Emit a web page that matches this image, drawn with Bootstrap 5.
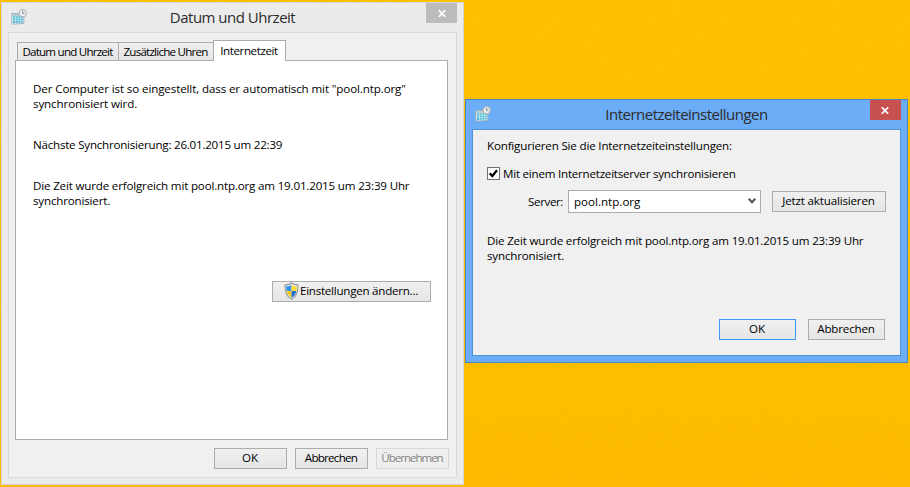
<!DOCTYPE html>
<html lang="de">
<head>
<meta charset="utf-8">
<meta name="viewport" content="width=device-width, initial-scale=1">
<title>Datum und Uhrzeit</title>
<link href="https://cdn.jsdelivr.net/npm/bootstrap@5.3.0/dist/css/bootstrap.min.css" rel="stylesheet">
<style>
body{height:487px;overflow:hidden;background:linear-gradient(#ffc000 0,#ffc000 65%,#ffba00 100%);font:11.6px/15px "Open Sans","Noto Sans",sans-serif;color:#000}
.wallpaper{left:0;top:0;width:910px;height:487px;z-index:-1}
.win{border:1px solid;padding:0 6px 6px}
.win-main{width:463px;height:483px;margin:2px 1px 0;background:#ebebeb;border-color:#d5d5d5}
.win-dialog{width:443px;height:264px;margin-top:99px;background:#6badf6;border-color:#4a87c9}
.titlebar{height:29px;flex:none}
.caption{font-size:15px;line-height:20px;letter-spacing:-.5px;color:#2b2b2b;padding-top:4px}
.app-icon{width:16px;height:16px;margin:6px 0 0 3px}
.close-btn{width:31px;height:20px;border:0;padding:0;background:#bcbcbc;color:#fff}
.win-dialog .close-btn{background:#c75050}
.client{background:#f0f0f0;border:1px solid #d9d9d9}
.win-dialog .client{border-color:#4f92d8;padding:8px 14px 15px}
.win-main .client{padding:7px 8px 8px 6px}
.tabs{height:21px;padding-left:2px;margin-bottom:-1px;z-index:1}
.tab-item{height:18px;border:1px solid #acacac;border-bottom:0;border-right:0;background:linear-gradient(#f0f0f0,#e5e5e5);padding:0 1px 0 0;line-height:18px;text-align:center;color:#000;letter-spacing:-.78px;margin-bottom:1px}
.tab-item.current{height:21px;margin:0;background:#fff;border-right:1px solid #acacac;line-height:17px;padding-bottom:2px;letter-spacing:-.4px}
.t1{width:101px}.t2{width:95px}.t3{width:73px}
.panel{background:#fff;border:1px solid #acacac;padding:20px 16px 0 17px;height:380px}
.panel p{margin:0}
.panel .sync-next{margin:26px 0}
.push{height:21px;border:1px solid #acacac;border-radius:0;padding:0 1px 1px 0;background:linear-gradient(#f0f0f0,#e5e5e5);font-size:11.6px;line-height:18px;color:#000;white-space:nowrap;letter-spacing:-.18px}
.push.default{border-color:#3c97f7}
.push:disabled{color:#838383;border-color:#d9d9d9;background:#efefef}
.push.tight{letter-spacing:-.75px}
.push.tighter{letter-spacing:-1.05px}
.w73{width:73px}.w77{width:77px}
.shield{width:15px;height:18px}
.change-btn{width:159px;margin-top:73px;gap:1px;letter-spacing:-.25px}
.actions-main{gap:8px;padding-top:8px;margin-right:-1px}
.checkbox{width:13px;height:13px;border:1px solid #707070;background:#fff;flex:none}
.check-line{margin-top:13px;gap:3px}
.server-line{margin-top:9px}
.server-label{width:76px;margin-right:5px;letter-spacing:-.4px}
.combo{width:193px;height:23px;background:#fff;border:1px solid #acacac;padding:0 4px 1px 5px;flex:none}
.update-btn{width:114px;margin-left:11px}
.status{margin-top:20px}
.actions-dialog{gap:12px;padding-right:1px}
.ls-a{letter-spacing:-.12px}.ls-b{letter-spacing:-.23px}.ls-c{letter-spacing:-.18px}
</style>
</head>
<body class="d-flex align-items-start">
<svg class="wallpaper position-absolute" aria-hidden="true"><filter id="grain" x="0" y="0" width="100%" height="100%"><feTurbulence type="fractalNoise" baseFrequency=".3" numOctaves="2" seed="4"/><feColorMatrix values="0 0 0 0 .85  0 0 0 0 .5  0 0 0 0 0  1.6 0 0 0 -.6"/></filter><rect width="910" height="487" filter="url(#grain)" opacity=".35"/></svg>
<svg class="d-none" aria-hidden="true">
  <symbol id="clock-calendar" viewBox="0 0 16 16">
    <path d="M.8 4.500h12v10l-12 .6z" fill="#e8f2f5" stroke="#9db3bd"/>
    <path d="M1.300 5h10v2h-10z" fill="#b7cbd3"/>
    <path d="M2 7.200h9.800v6.200l-9.800.5z" fill="#4fb9d3"/>
    <path d="M4.500 7v7M7 7v7M9.500 7v7M2 9.300h10M2 11.500h10" stroke="#d9f4f8" stroke-width=".6"/>
    <circle cx="11.700" cy="4.200" r="3.700" fill="#eceeef" stroke="#a8b0b5"/>
    <path d="M11.600 1.900v2.500h2" fill="none" stroke="#71808b" stroke-width=".9"/>
  </symbol>
  <symbol id="cross" viewBox="0 0 8 7"><path d="M.8.2 7.200 6.800M7.200.2.8 6.800" stroke="currentColor" stroke-width="1.700" fill="none"/></symbol>
</svg>

<main class="win win-main d-flex flex-column flex-shrink-0">
  <header class="titlebar d-flex justify-content-between align-items-start">
    <svg class="app-icon"><use href="#clock-calendar"/></svg>
    <div class="caption ps-2 ms-1">Datum und Uhrzeit</div>
    <button class="close-btn d-flex align-items-center justify-content-center" aria-label="Schließen"><svg width="8" height="7"><use href="#cross"/></svg></button>
  </header>
  <section class="client flex-grow-1 d-flex flex-column">
    <div class="tabs d-flex align-items-end position-relative" role="tablist">
      <button class="tab-item t1" role="tab">Datum und Uhrzeit</button>
      <button class="tab-item t2" role="tab">Zusätzliche Uhren</button>
      <button class="tab-item current t3" role="tab">Internetzeit</button>
    </div>
    <div class="panel d-flex flex-column">
      <p class="ls-a">Der Computer ist so eingestellt, dass er automatisch mit "pool.ntp.org"<br>synchronisiert wird.</p>
      <p class="ls-b sync-next">Nächste Synchronisierung: 26.01.2015 um 22:39</p>
      <p class="ls-c">Die Zeit wurde erfolgreich mit pool.ntp.org am 19.01.2015 um 23:39 Uhr<br>synchronisiert.</p>
      <button class="push change-btn align-self-end d-flex align-items-center justify-content-center">
        <svg class="shield" viewBox="0 0 16 18" preserveAspectRatio="none"><path d="M8 1C6 2.500 4 3 1.200 2.900.7 9.600 2.200 14.200 8 17.200c5.800-3 7.300-7.600 6.800-14.300C12 3 10 2.500 8 1z" fill="#f0f2f4" stroke="#8c9298" stroke-width="1.100"/><path d="M8 2.700V9H2.700c-.3-1.500-.4-3-.3-4.800C4.500 4.200 6.500 3.800 8 2.700z" fill="#2f93e8"/><path d="M8 2.700V9h5.300c.3-1.500.4-3 .3-4.800C11.500 4.200 9.500 3.800 8 2.700z" fill="#ffd83a"/><path d="M2.700 9H8v6.700C5.200 14.100 3.400 12 2.700 9z" fill="#fcc81c"/><path d="M13.300 9H8v6.700c2.800-1.600 4.600-3.700 5.300-6.700z" fill="#1b73cf"/></svg>
        <span>Einstellungen ändern...</span>
      </button>
    </div>
    <footer class="d-flex justify-content-end actions-main">
      <button class="push w73">OK</button>
      <button class="push w73 tight">Abbrechen</button>
      <button class="push w73 tighter" disabled>Übernehmen</button>
    </footer>
  </section>
</main>

<section class="win win-dialog d-flex flex-column flex-shrink-0">
  <header class="titlebar d-flex justify-content-between align-items-start">
    <svg class="app-icon"><use href="#clock-calendar"/></svg>
    <div class="caption ps-2 ms-1">Internetzeiteinstellungen</div>
    <button class="close-btn d-flex align-items-center justify-content-center" aria-label="Schließen"><svg width="8" height="7"><use href="#cross"/></svg></button>
  </header>
  <div class="client flex-grow-1 d-flex flex-column">
    <div class="ls-c">Konfigurieren Sie die Internetzeiteinstellungen:</div>
    <label class="check-line d-flex align-items-center ls-b">
      <span class="checkbox d-flex"><svg width="11" height="11" viewBox="0 0 11 11"><path d="M1.700 5.300 4.300 8 9 2.200" fill="none" stroke="#000" stroke-width="2.200"/></svg></span>
      <span>Mit einem Internetzeitserver synchronisieren</span>
    </label>
    <div class="server-line d-flex align-items-center">
      <span class="server-label text-end">Server:</span>
      <div class="combo d-flex align-items-center justify-content-between"><span>pool.ntp.org</span><svg width="8" height="6" viewBox="0 0 8 6"><path d="M.7.8 4 4.200 7.300.8" fill="none" stroke="#505050" stroke-width="2"/></svg></div>
      <button class="push update-btn">Jetzt aktualisieren</button>
    </div>
    <div class="status ls-c">Die Zeit wurde erfolgreich mit pool.ntp.org am 19.01.2015 um 23:39 Uhr<br>synchronisiert.</div>
    <div class="d-flex justify-content-end mt-auto actions-dialog">
      <button class="push default w77">OK</button>
      <button class="push w77">Abbrechen</button>
    </div>
  </div>
</section>
<script src="https://cdn.jsdelivr.net/npm/bootstrap@5.3.0/dist/js/bootstrap.bundle.min.js"></script>
</body>
</html>
